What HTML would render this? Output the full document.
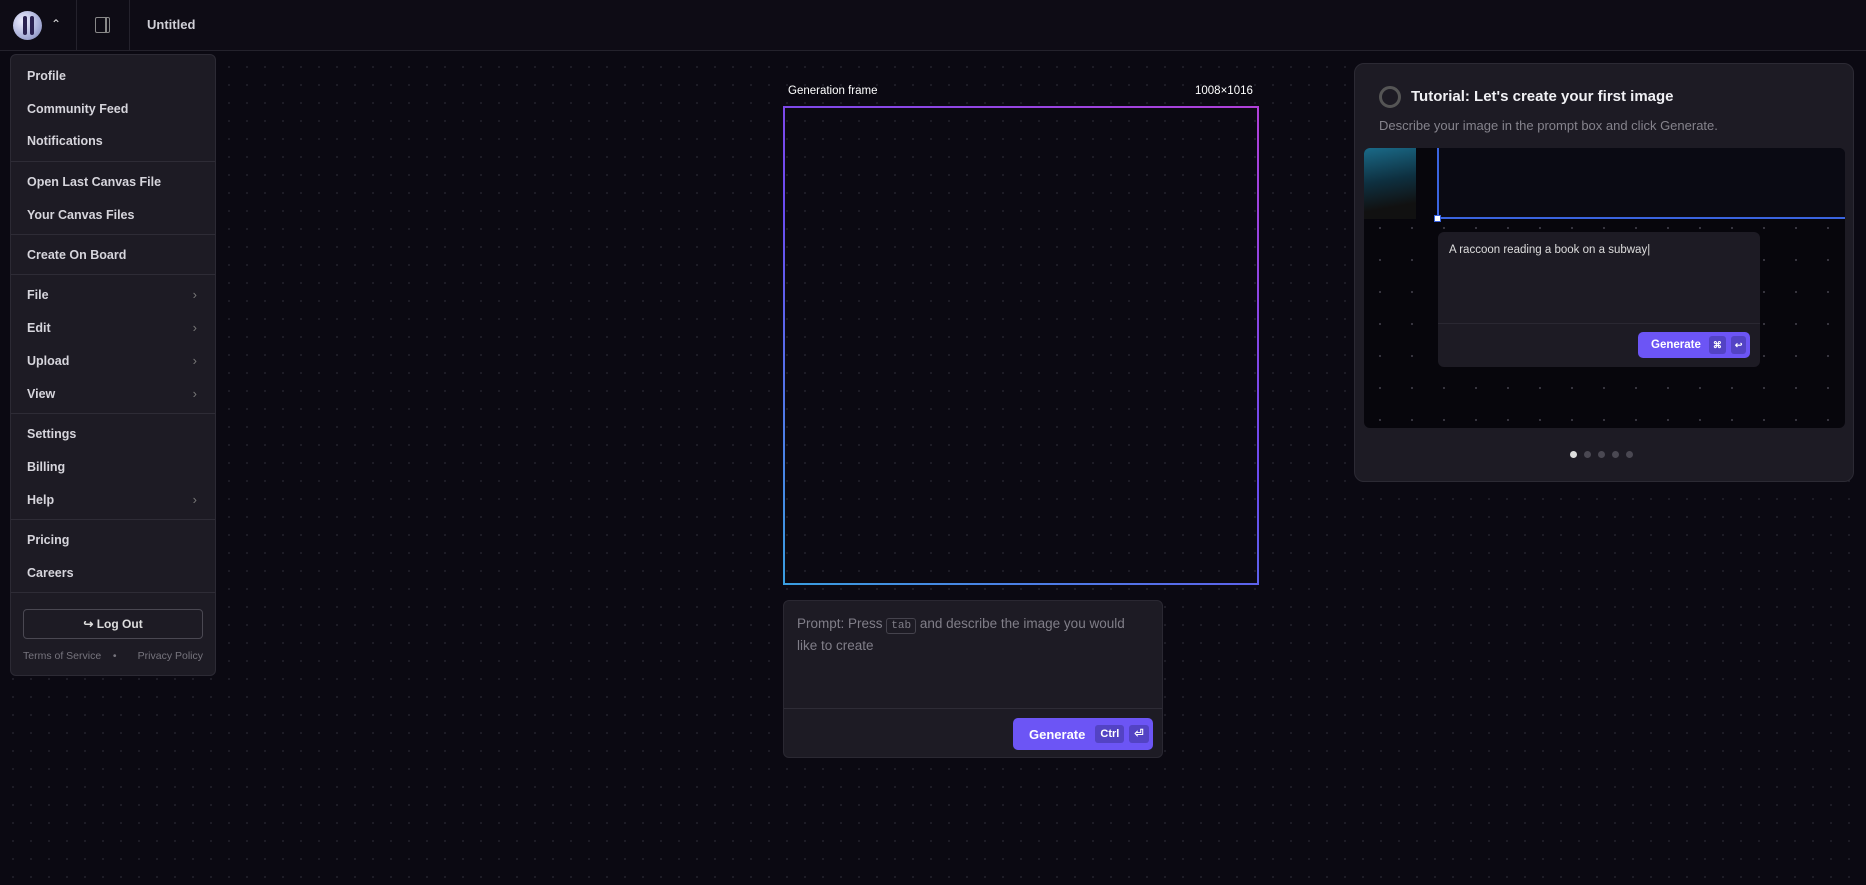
<!DOCTYPE html>
<html><head><style>
*{box-sizing:border-box;margin:0;padding:0}
body{width:1866px;height:885px;overflow:hidden;background:#0b0912;font-family:"Liberation Sans",sans-serif;position:relative;
background-image:radial-gradient(circle,#1f1d28 1px,transparent 1.2px);background-size:18px 18px;background-position:4px 4px}
.hdr{position:absolute;left:0;top:0;width:1866px;height:51px;background:#0e0c15;border-bottom:1px solid #24222c}
.menu{position:absolute;left:10px;top:54px;width:206px;height:622px;background:#1d1b24;border:1px solid #2c2a34;border-radius:6px}
.mi{position:absolute;left:16px;color:#d6d5dc;font-size:12.5px;font-weight:bold}
.sep{position:absolute;left:0;right:0;height:1px;background:#2e2c36}
.chev{position:absolute;right:18px;color:#777;font-size:13px}
.frame{position:absolute;left:783px;top:106px;width:476px;height:479px;border:2px solid;border-image:linear-gradient(30deg,#3a9ee0,#6a4cf0 50%,#b040d8) 1}
.prompt{position:absolute;left:783px;top:600px;width:380px;height:158px;background:#1d1b24;border:1px solid #2a2832;border-radius:6px}
.btn{position:absolute;background:#6c55f5;border-radius:5px;color:#fff;font-weight:bold;display:flex;align-items:center;white-space:nowrap}
.kbd{display:inline-block;background:#5343c4;border-radius:3px;font-size:11px;line-height:18px;padding:0 5px;margin-left:5px}
.tut{position:absolute;left:1354px;top:63px;width:500px;height:419px;background:#1d1b24;border:1px solid #2c2a34;border-radius:10px}
</style></head><body>
<div class="hdr">
 <div style="position:absolute;left:13px;top:11px;width:29px;height:29px;border-radius:50%;background:radial-gradient(circle at 35% 35%,#eef,#a9b0d8 60%,#7a7fb0)"></div>
 <div style="position:absolute;left:23px;top:16px;width:4px;height:19px;background:#2a2250;border-radius:2px"></div>
 <div style="position:absolute;left:30px;top:16px;width:4px;height:19px;background:#2a2250;border-radius:2px"></div>
 <div style="position:absolute;left:51px;top:17px;color:#ddd;font-size:12px">&#8963;</div>
 <div style="position:absolute;left:76px;top:0;width:1px;height:51px;background:#24222c"></div>
 <div style="position:absolute;left:95px;top:17px;width:15px;height:16px;border:1.5px solid #888;border-radius:2px"></div>
 <div style="position:absolute;left:105px;top:17px;width:1.5px;height:16px;background:#888"></div>
 <div style="position:absolute;left:129px;top:0;width:1px;height:51px;background:#24222c"></div>
 <div style="position:absolute;left:147px;top:17px;color:#cfcfd6;font-size:13px;font-weight:bold">Untitled</div>
</div>
<div class="menu">
 <div class="mi" style="top:14px">Profile</div>
 <div class="mi" style="top:47px">Community Feed</div>
 <div class="mi" style="top:79px">Notifications</div>
 <div class="sep" style="top:106px"></div>
 <div class="mi" style="top:120px">Open Last Canvas File</div>
 <div class="mi" style="top:153px">Your Canvas Files</div>
 <div class="sep" style="top:179px"></div>
 <div class="mi" style="top:193px">Create On Board</div>
 <div class="sep" style="top:219px"></div>
 <div class="mi" style="top:233px">File</div><div class="chev" style="top:232px">›</div>
 <div class="mi" style="top:266px">Edit</div><div class="chev" style="top:265px">›</div>
 <div class="mi" style="top:299px">Upload</div><div class="chev" style="top:298px">›</div>
 <div class="mi" style="top:332px">View</div><div class="chev" style="top:331px">›</div>
 <div class="sep" style="top:358px"></div>
 <div class="mi" style="top:372px">Settings</div>
 <div class="mi" style="top:405px">Billing</div>
 <div class="mi" style="top:438px">Help</div><div class="chev" style="top:437px">›</div>
 <div class="sep" style="top:464px"></div>
 <div class="mi" style="top:478px">Pricing</div>
 <div class="mi" style="top:511px">Careers</div>
 <div class="sep" style="top:537px"></div>
 <div style="position:absolute;left:12px;top:554px;width:180px;height:30px;border:1px solid #4a4852;border-radius:4px;color:#ddd;font-size:12px;font-weight:bold;text-align:center;line-height:28px">&#8618; Log Out</div>
 <div style="position:absolute;left:12px;top:595px;width:180px;color:#77757e;font-size:10.5px">Terms of Service &nbsp;&nbsp; • &nbsp;&nbsp; <span style="float:right">Privacy Policy</span></div>
</div>
<div style="position:absolute;left:788px;top:85px;color:#fff;font-size:11.5px">Generation frame</div>
<div style="position:absolute;left:1195px;top:85px;color:#fff;font-size:11.5px">1008×1016</div>
<div class="frame"></div>
<div class="prompt">
 <div style="position:absolute;left:13px;top:13px;width:350px;color:#807e88;font-size:13.5px;line-height:20px">Prompt: Press <span style="font-family:'Liberation Mono',monospace;font-size:11px;border:1px solid #45434d;border-radius:3px;padding:1px 4px">tab</span> and describe the image you would like to create</div>
 <div style="position:absolute;left:0;right:0;top:107px;height:1px;background:#2e2c36"></div>
 <div class="btn" style="left:229px;top:117px;width:140px;height:32px;font-size:13px;padding-left:16px">Generate <span class="kbd" style="margin-left:10px">Ctrl</span><span class="kbd">⏎</span></div>
</div>
<div class="tut">
 <div style="position:absolute;left:24px;top:22px;width:22px;height:22px;border:3px solid #555;border-radius:50%"></div>
 <div style="position:absolute;left:56px;top:24px;color:#f0f0f4;font-size:15px;font-weight:bold">Tutorial: Let's create your first image</div>
 <div style="position:absolute;left:24px;top:54px;color:#85838c;font-size:13px">Describe your image in the prompt box and click Generate.</div>
 <div style="position:absolute;left:9px;top:84px;width:481px;height:280px;border-radius:6px;overflow:hidden;background:#07060c;background-image:radial-gradient(circle,#3a3842 1px,transparent 1.2px);background-size:32px 32px">
  <div style="position:absolute;left:0;top:0;width:52px;height:71px;background:linear-gradient(170deg,#1a6a88,#0e3040 45%,#111 80%)"></div>
  <div style="position:absolute;left:73px;top:0;width:410px;height:71px;background:#0a0a13;border-left:2px solid #3a64e0;border-bottom:2px solid #3a64e0"></div>
  <div style="position:absolute;left:70px;top:67px;width:7px;height:7px;background:#fff;border:1px solid #3a64e0"></div>
  <div style="position:absolute;left:74px;top:84px;width:322px;height:135px;background:#1d1b24;border-radius:6px">
   <div style="position:absolute;left:11px;top:12px;color:#ddd;font-size:11.5px">A raccoon reading a book on a subway|</div>
   <div style="position:absolute;left:0;right:0;top:91px;height:1px;background:#2a2832"></div>
   <div class="btn" style="left:200px;top:100px;width:112px;height:26px;font-size:11.5px;padding-left:13px">Generate <span class="kbd" style="font-size:9px;padding:0 4px;margin-left:8px">⌘</span><span class="kbd" style="font-size:9px;padding:0 4px">↩</span></div>
  </div>
 </div>
 <div style="position:absolute;left:215px;top:387px;width:7px;height:7px;border-radius:50%;background:#ddd"></div>
 <div style="position:absolute;left:229px;top:387px;width:7px;height:7px;border-radius:50%;background:#4a4852"></div>
 <div style="position:absolute;left:243px;top:387px;width:7px;height:7px;border-radius:50%;background:#4a4852"></div>
 <div style="position:absolute;left:257px;top:387px;width:7px;height:7px;border-radius:50%;background:#4a4852"></div>
 <div style="position:absolute;left:271px;top:387px;width:7px;height:7px;border-radius:50%;background:#4a4852"></div>
</div>
</body></html>
